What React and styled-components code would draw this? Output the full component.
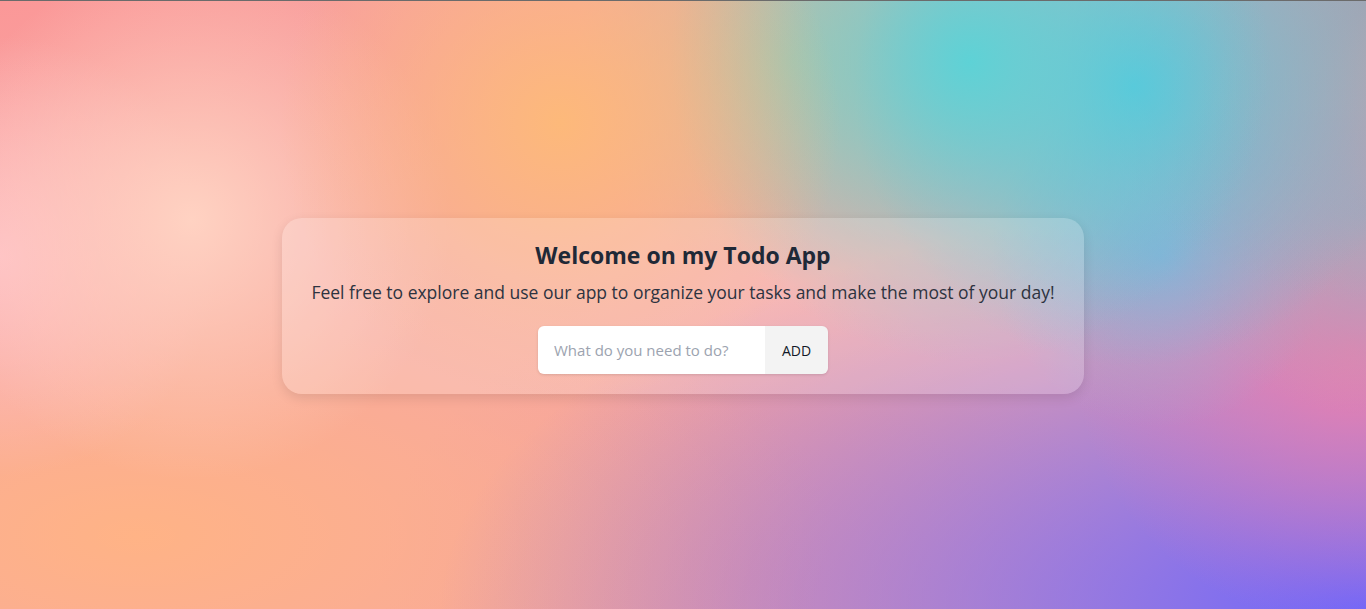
import React, { useState } from 'react';
import styled, { createGlobalStyle } from 'styled-components';

const GlobalStyle = createGlobalStyle`
  * { box-sizing: border-box; }
  html, body { margin: 0; padding: 0; }
  body {
    font-family: "Open Sans", "Noto Sans", sans-serif;
    border-top: 1px solid #6b6b6b;
  }
`;

const Page = styled.main`
  min-height: calc(100vh - 1px);
  padding-top: 2px;
  display: flex;
  align-items: center;
  justify-content: center;
  background-color: #f6a6a2;
  background-image:
    radial-gradient(circle at 41% 20%, #fdb97a 0px, transparent 280px),
    radial-gradient(circle at 71% 10%, #5ed2d6 0px, rgba(94, 210, 214, 0.6) 110px, transparent 300px),
    radial-gradient(circle at 83% 14%, #55c4de 0px, rgba(85, 196, 222, 0.6) 100px, transparent 280px),
    radial-gradient(circle at 100% 0%, #a8a3b1 0px, transparent 300px),
    radial-gradient(circle at 100% 35%, #aaa6bd 0px, transparent 200px),
    radial-gradient(circle at 85% 42%, #9eaad3 0px, transparent 170px),
    radial-gradient(circle at 99% 57%, #ea7eae 0px, rgba(234, 126, 174, 0.6) 90px, transparent 280px),
    radial-gradient(at 100% 100%, #6e66fb 0px, transparent 48%),
    radial-gradient(circle at 58% 10%, #c6bfa0 0px, transparent 220px),
    radial-gradient(circle at 14% 36%, #ffd2c2 0px, transparent 260px),
    radial-gradient(circle at 0% 42%, #ffc0c6 0px, transparent 220px),
    radial-gradient(at 0% 0%, #fb9898 0px, transparent 30%),
    radial-gradient(at 10% 88%, #ffb386 0px, transparent 40%),
    radial-gradient(at 55% 95%, #f29c9e 0px, transparent 35%);
`;

const Card = styled.section`
  width: 802px;
  padding: 21px 28px 20px;
  border-radius: 20px;
  background: rgba(255, 255, 255, 0.2);
  box-shadow: 0 4px 12px rgba(0, 0, 0, 0.1);
  display: flex;
  flex-direction: column;
  align-items: center;
  color: #1f2937;
`;

const Title = styled.h1`
  margin: 0;
  font-size: 23px;
  line-height: 32px;
  font-weight: 700;
`;

const Subtitle = styled.p`
  margin: 9px 0 0;
  font-size: 17.5px;
  line-height: 24px;
  color: #2d3340;
  white-space: nowrap;
`;

const Form = styled.form`
  margin-top: 22px;
  display: flex;
  height: 48px;
  border-radius: 6px;
  overflow: hidden;
  box-shadow: 0 1px 3px rgba(0, 0, 0, 0.12);
`;

const Input = styled.input`
  width: 227px;
  border: none;
  outline: none;
  padding: 0 16px;
  font-family: inherit;
  font-size: 15px;
  color: #1f2937;
  background: #fff;
  &::placeholder { color: #9ca3af; }
`;

const AddButton = styled.button`
  width: 63px;
  border: none;
  background: #f3f3f3;
  font-family: inherit;
  font-size: 14px;
  color: #111827;
  cursor: pointer;
`;

export default function App() {
  const [text, setText] = useState('');
  return (
    <>
      <GlobalStyle />
      <Page>
        <Card>
          <Title>Welcome on my Todo App</Title>
          <Subtitle>
            Feel free to explore and use our app to organize your tasks and make the most of your day!
          </Subtitle>
          <Form onSubmit={(e) => e.preventDefault()}>
            <Input
              value={text}
              onChange={(e) => setText(e.target.value)}
              placeholder="What do you need to do?"
            />
            <AddButton type="submit">ADD</AddButton>
          </Form>
        </Card>
      </Page>
    </>
  );
}
